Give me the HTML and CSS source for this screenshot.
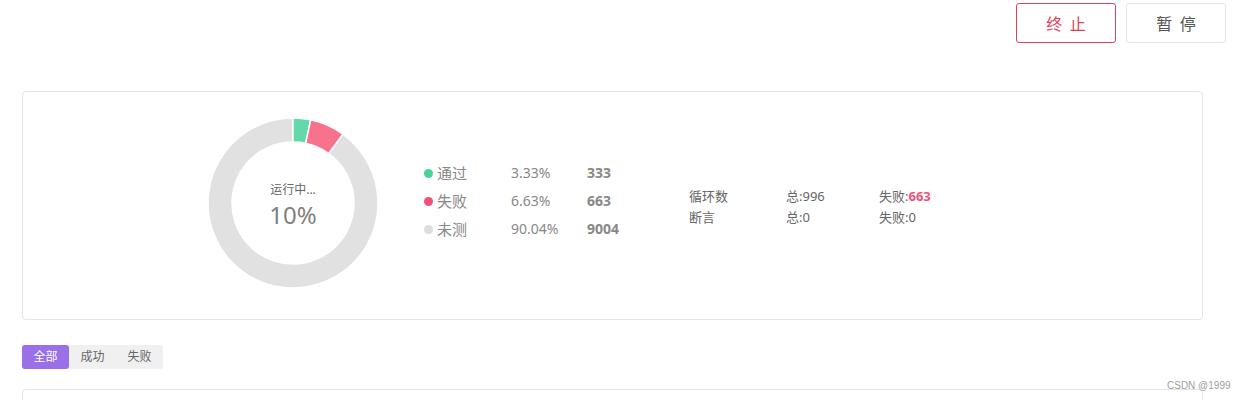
FILE: index.html
```html
<!DOCTYPE html>
<html lang="zh">
<head>
    <meta charset="UTF-8">
    <title>运行详情</title>
    <link rel="stylesheet" href="styles.css">
</head>
<body>
<div class="toolbar">
    <button class="btn btn-stop">终 止</button>
    <button class="btn">暂 停</button>
</div>

<div class="card summary">
    <div class="donut">
        <svg width="170" height="170" viewBox="0 0 170 170">
            <path d="M134.79,16.11 A85,85 0 1 1 85,0 L85,24 A61,61 0 1 0 120.73,35.56 Z" fill="#e1e1e1" stroke="#fff" stroke-width="1.5"/>
            <path d="M85,0 A85,85 0 0 1 102.67,1.86 L97.68,25.33 A61,61 0 0 0 85,24 Z" fill="#62d9aa" stroke="#fff" stroke-width="1.5"/>
            <path d="M102.67,1.86 A85,85 0 0 1 134.79,16.11 L120.73,35.56 A61,61 0 0 0 97.68,25.33 Z" fill="#f8718d" stroke="#fff" stroke-width="1.5"/>
        </svg>
        <div class="donut-text">
            <div class="donut-status">运行中...</div>
            <div class="donut-value">10%</div>
        </div>
    </div>

    <div class="legend">
        <div class="legend-row">
            <span class="dot dot-pass"></span><span class="legend-name">通过</span>
            <span class="legend-pct">3.33%</span>
            <span class="legend-num">333</span>
        </div>
        <div class="legend-row">
            <span class="dot dot-fail"></span><span class="legend-name">失败</span>
            <span class="legend-pct">6.63%</span>
            <span class="legend-num">663</span>
        </div>
        <div class="legend-row">
            <span class="dot dot-none"></span><span class="legend-name">未测</span>
            <span class="legend-pct">90.04%</span>
            <span class="legend-num">9004</span>
        </div>
    </div>

    <div class="stats">
        <div class="stats-row">
            <span class="stats-name">循环数</span>
            <span class="stats-total">总:996</span>
            <span>失败:<b class="fail-num">663</b></span>
        </div>
        <div class="stats-row">
            <span class="stats-name">断言</span>
            <span class="stats-total">总:0</span>
            <span>失败:0</span>
        </div>
    </div>
</div>

<div class="tabs">
    <span class="tab active">全部</span>
    <span class="tab">成功</span>
    <span class="tab">失败</span>
</div>

<div class="card result-list"></div>

<div class="watermark">CSDN @1999</div>
</body>
</html>
```

FILE: styles.css
```css
body {
    margin: 0;
    font-family: 'Noto Sans', 'Noto Sans CJK SC', sans-serif;
    background: #fff;
    color: #666;
    overflow: hidden;
    height: 400px;
}
.toolbar {
    display: flex;
    justify-content: flex-end;
    gap: 10px;
    padding: 3px 17px 0 0;
}
.btn {
    width: 100px;
    height: 40px;
    border: 1px solid #e6e6e6;
    border-radius: 3px;
    background: #fff;
    color: #555;
    font-family: 'Noto Sans CJK SC', sans-serif;
    font-size: 16px;
    letter-spacing: 2px;
    padding: 0 0 0 2px;
}
.btn-stop {
    border-color: #e0405a;
    color: #e0405a;
}
.card {
    margin: 0 40px 0 22px;
    border: 1px solid #e5e5e5;
    border-radius: 4px;
}
.summary {
    margin-top: 48px;
    height: 227px;
    display: flex;
    align-items: center;
    padding-left: 185px;
}
.donut {
    position: relative;
    width: 170px;
    height: 170px;
    margin-top: -6px;
}
.donut svg {
    display: block;
}
.donut-text {
    position: absolute;
    left: 0;
    top: 0;
    width: 170px;
    height: 170px;
    box-sizing: border-box;
    padding-top: 8px;
    display: flex;
    flex-direction: column;
    justify-content: center;
    align-items: center;
}
.donut-status {
    font-size: 12px;
    color: #666;
    line-height: 16px;
}
.donut-value {
    font-size: 24px;
    color: #808080;
    line-height: 34px;
}
.legend {
    margin-left: 46px;
    width: 225px;
    margin-top: -10px;
}
.legend-row {
    display: flex;
    align-items: center;
    height: 28px;
    color: #888;
}
.dot {
    width: 9px;
    height: 9px;
    border-radius: 50%;
    margin-right: 4px;
    margin-top: 2px;
}
.dot-pass { background: #48d39a; }
.dot-fail { background: #f0507a; }
.dot-none { background: #dddddd; }
.legend-name {
    width: 74px;
    font-size: 15px;
}
.legend-pct {
    width: 76px;
    font-size: 14px;
}
.legend-num {
    font-size: 14px;
    font-weight: bold;
}
.stats {
    margin-left: 40px;
    font-size: 13px;
    color: #666;
}
.stats-row {
    display: flex;
    height: 21px;
    align-items: center;
}
.stats-name {
    width: 97px;
}
.stats-total {
    width: 93px;
}
.fail-num {
    color: #f0507a;
}
.tabs {
    display: inline-flex;
    margin: 25px 0 0 22px;
    background: #f0f0f0;
    border-radius: 3px;
    font-size: 12px;
}
.tab {
    width: 47px;
    height: 24px;
    line-height: 24px;
    text-align: center;
    color: #666;
    border-radius: 3px;
}
.tab.active {
    background: #9a6fe8;
    color: #fff;
}
.result-list {
    margin-top: 20px;
    height: 14px;
}
.watermark {
    position: absolute;
    left: 1167px;
    top: 380px;
    font-family: 'Liberation Sans', sans-serif;
    font-size: 10px;
    color: #a0a0a0;
}
```
